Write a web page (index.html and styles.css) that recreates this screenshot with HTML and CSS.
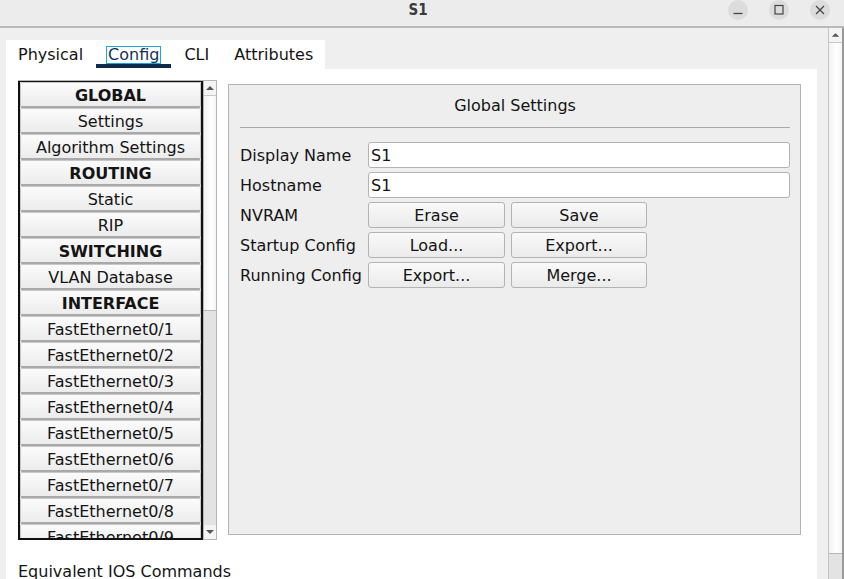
FILE: index.html
```html
<!DOCTYPE html>
<html>
<head>
<meta charset="utf-8">
<link rel="stylesheet" href="styles.css">
</head>
<body>
<div class="titlebar">
  <div class="title">S1</div>
  <div class="winbtns">
    <span class="wbtn"><svg width="20" height="20" viewBox="0 0 20 20"><path d="M5.5 13.5h9" stroke="#444" stroke-width="1.3"/></svg></span>
    <span class="wbtn"><svg width="20" height="20" viewBox="0 0 20 20"><rect x="6" y="5.5" width="8" height="8.5" fill="none" stroke="#444" stroke-width="1.2"/></svg></span>
    <span class="wbtn"><svg width="20" height="20" viewBox="0 0 20 20"><path d="M6 6l8 8M14 6l-8 8" stroke="#444" stroke-width="1.2"/></svg></span>
  </div>
</div>
<div class="window">
  <div class="content">
    <div class="tabs">
      <div class="tab">Physical</div>
      <div class="tab active"><span class="focus">Config</span></div>
      <div class="tab">CLI</div>
      <div class="tab">Attributes</div>
    </div>
    <div class="panel">
      <div class="panel-row">
        <div class="list">
          <div class="list-view">
            <div class="item head">GLOBAL</div>
            <div class="item">Settings</div>
            <div class="item">Algorithm Settings</div>
            <div class="item head">ROUTING</div>
            <div class="item">Static</div>
            <div class="item">RIP</div>
            <div class="item head">SWITCHING</div>
            <div class="item">VLAN Database</div>
            <div class="item head">INTERFACE</div>
            <div class="item">FastEthernet0/1</div>
            <div class="item">FastEthernet0/2</div>
            <div class="item">FastEthernet0/3</div>
            <div class="item">FastEthernet0/4</div>
            <div class="item">FastEthernet0/5</div>
            <div class="item">FastEthernet0/6</div>
            <div class="item">FastEthernet0/7</div>
            <div class="item">FastEthernet0/8</div>
            <div class="item">FastEthernet0/9</div>
          </div>
          <div class="sb small">
            <div class="sb-arrow"><svg width="12" height="8" viewBox="0 0 12 8"><path d="M2 6h8L6 2z" fill="#555"/></svg></div>
            <div class="sb-thumb small-thumb"></div>
            <div class="sb-track"></div>
            <div class="sb-arrow"><svg width="12" height="8" viewBox="0 0 12 8"><path d="M2 2h8L6 6z" fill="#555"/></svg></div>
          </div>
        </div>
        <div class="settings">
          <div class="settings-title">Global Settings</div>
          <div class="sep"></div>
          <div class="form">
            <div class="label">Display Name</div>
            <div class="input">S1</div>
            <div class="label">Hostname</div>
            <div class="input">S1</div>
            <div class="label">NVRAM</div>
            <div class="btns"><div class="btn b1">Erase</div><div class="btn b2">Save</div></div>
            <div class="label">Startup Config</div>
            <div class="btns"><div class="btn b1">Load...</div><div class="btn b2">Export...</div></div>
            <div class="label">Running Config</div>
            <div class="btns"><div class="btn b1">Export...</div><div class="btn b2">Merge...</div></div>
          </div>
        </div>
      </div>
      <div class="equiv">Equivalent IOS Commands</div>
    </div>
  </div>
  <div class="sb main">
    <div class="sb-arrow"><svg width="14" height="8" viewBox="0 0 14 8"><path d="M3 6h8L7 2z" fill="#555"/></svg></div>
    <div class="sb-thumb main-thumb"></div>
    <div class="sb-track"></div>
  </div>
</div>
</body>
</html>
```
FILE: styles.css
```css
* { box-sizing: border-box; }
html, body { margin: 0; padding: 0; }
body {
  width: 844px;
  height: 579px;
  overflow: hidden;
  background: #efefef;
  font-family: "DejaVu Sans", sans-serif;
  font-size: 16px;
  color: #141414;
}
.titlebar {
  height: 28px;
  background: #ececec;
  border-bottom: 2px solid #b9b9b9;
  position: relative;
}
.title {
  text-align: center;
  font-weight: bold;
  font-size: 15px;
  color: #3a3a3a;
  line-height: 20px;
  padding-right: 8px;
  font-family: "DejaVu Sans Condensed", "DejaVu Sans", sans-serif;
}
.winbtns {
  position: absolute;
  right: 14px;
  top: 0;
  display: flex;
  gap: 21px;
}
.wbtn {
  width: 20px;
  height: 20px;
  border-radius: 50%;
  background: #dcdcdc;
  display: block;
}
.wbtn svg { display: block; }
.window {
  display: flex;
  height: 551px;
}
.content {
  flex: 1;
  padding: 12px 11px 0 6px;
  display: flex;
  flex-direction: column;
}
.tabs {
  display: flex;
  gap: 1px;
  align-self: flex-start;
  background: #fff;
  height: 29px;
}
.tab {
  padding: 1px 12px 0;
  line-height: 28px;
  position: relative;
  white-space: nowrap;
}
.tab.active::after {
  content: "";
  position: absolute;
  left: 0;
  right: 0;
  bottom: 1px;
  height: 4px;
  background: #0f2a4f;
}
.focus {
  outline: 1px solid #1aa6d6;
  outline-offset: 0px;
  color: #13325a;
  display: inline-block;
  line-height: 16px;
  padding: 0 1px;
  margin: 0 -1px;
}
.panel {
  flex: 1;
  background: #fff;
  padding: 11px 16px 0 12px;
}
.panel-row {
  display: flex;
  gap: 11px;
  align-items: flex-start;
}
.list {
  display: flex;
  width: 199px;
  height: 460px;
  border-top: 1px solid #b5b5b5;
}
.list-view {
  width: 185px;
  height: 459px;
  border: 2px solid #111;
  border-top-width: 1px;
  overflow: hidden;
  background: #fff;
}
.item {
  height: 26px;
  line-height: 23px;
  padding-top: 1px;
  text-align: center;
  white-space: nowrap;
  background: linear-gradient(#fbfbfb, #ececec);
  border: 1px solid #c8c8c8;
  border-bottom: 2px solid #a9a9a9;
  border-radius: 2px;
}
.item.head { font-weight: bold; }
.sb {
  display: flex;
  flex-direction: column;
  background: #e2e2e2;
}
.sb.small {
  width: 14px;
  height: 459px;
  border: 1px solid #b5b5b5;
  border-top: none;
}
.sb-arrow {
  height: 14px;
  background: #f4f4f4;
  display: flex;
  align-items: center;
  justify-content: center;
  flex: none;
}
.sb-arrow svg { display: block; }
.sb-thumb {
  background: linear-gradient(90deg, #f2f2f2, #ffffff 60%, #f4f4f4);
  border-top: 1px solid #c8c8c8;
  border-bottom: 1px solid #b8b8b8;
  flex: none;
}
.small-thumb { height: 216px; }
.sb-track { flex: 1; background: #e3e3e3; }
.sb.main {
  width: 16px;
  height: 551px;
  border-left: 1px solid #c4c4c4;
  border-right: 2px solid #9a9a9a;
}
.main-thumb { height: 512px; }
.settings {
  margin-top: 4px;
  width: 573px;
  height: 451px;
  border: 1px solid #b4b4b4;
  background: #eeeeee;
  padding: 0 10px 0 11px;
}
.settings-title {
  text-align: center;
  line-height: 20px;
  padding-top: 11px;
}
.sep {
  margin-top: 11px;
  border-top: 1px solid #a9a9a9;
}
.form {
  margin-top: 14px;
  display: grid;
  grid-template-columns: 128px 422px;
  grid-auto-rows: 26px;
  row-gap: 4px;
}
.label {
  line-height: 26px;
  padding-top: 1px;
  white-space: nowrap;
}
.input {
  background: #fff;
  border: 1px solid #b3b3b3;
  border-radius: 3px;
  line-height: 24px;
  padding-top: 1px;
  padding-left: 2px;
}
.btns {
  display: flex;
  gap: 6px;
}
.btn {
  height: 26px;
  line-height: 23px;
  padding-top: 1px;
  text-align: center;
  border: 1px solid #b3b3b3;
  border-radius: 3px;
  background: linear-gradient(#f9f9f9, #ebebeb);
}
.b1 { width: 137px; }
.b2 { width: 136px; }
.equiv {
  margin-top: 22px;
  line-height: 20px;
}
```
